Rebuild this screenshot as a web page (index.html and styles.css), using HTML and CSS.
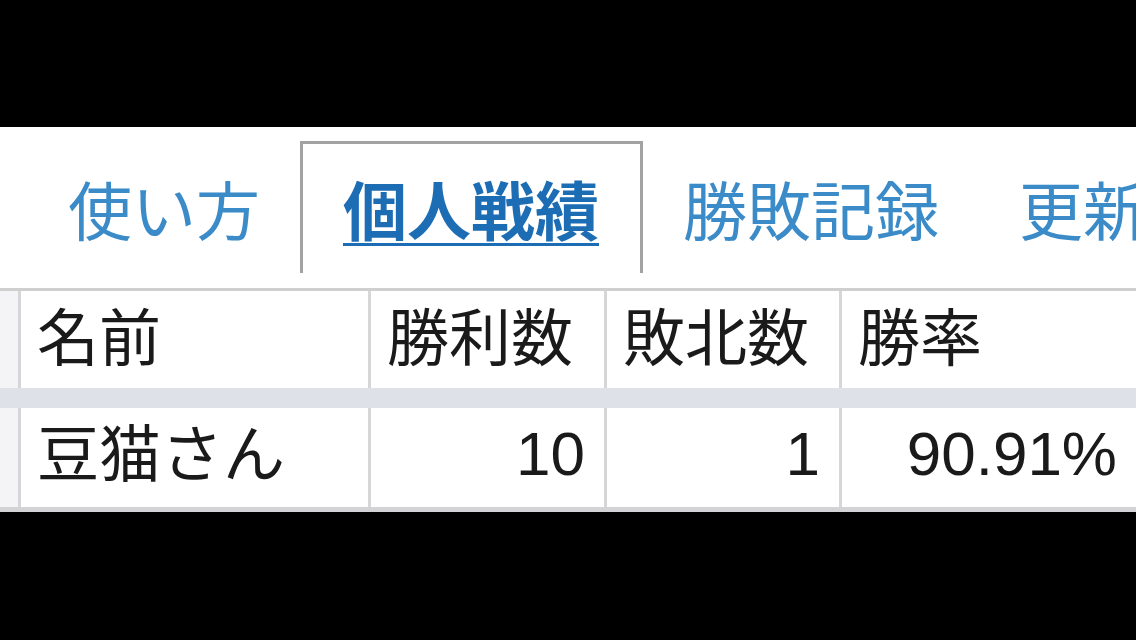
FILE: index.html
```html
<!DOCTYPE html>
<html lang="ja">
<head>
<meta charset="utf-8">
<title>個人戦績</title>
<link rel="stylesheet" href="styles.css">
</head>
<body>
<div class="screen">
  <div class="page">
    <nav class="tabs">
      <a class="tab" href="#">使い方</a>
      <a class="tab active" href="#">個人戦績</a>
      <a class="tab" href="#">勝敗記録</a>
      <a class="tab" href="#">更新</a>
    </nav>
    <div class="grid">
      <div class="cell side"></div>
      <div class="cell head">名前</div>
      <div class="cell head">勝利数</div>
      <div class="cell head">敗北数</div>
      <div class="cell head">勝率</div>
      <div class="band"></div>
      <div class="cell side"></div>
      <div class="cell name">豆猫さん</div>
      <div class="cell num">10</div>
      <div class="cell num">1</div>
      <div class="cell num">90.91%</div>
    </div>
  </div>
</div>
</body>
</html>
```
FILE: styles.css
```css
html, body {
  margin: 0;
  padding: 0;
  background: #000;
  overflow: hidden;
}
body {
  width: 1136px;
  height: 640px;
  font-family: "Liberation Sans", "Noto Sans CJK JP", sans-serif;
}
.screen {
  padding-top: 127px;
}
.page {
  background: #fff;
  height: 385px;
  overflow: hidden;
}
.tabs {
  display: flex;
  padding: 14px 0 0 28px;
  height: 132px;
  margin-bottom: 15px;
  white-space: nowrap;
}
.tab {
  display: block;
  height: 129px;
  line-height: 127px;
  padding: 0 40px;
  border-top: 3px solid transparent;
  font-family: "Noto Sans CJK JP", sans-serif;
  font-size: 64px;
  color: #3a8bc8;
  text-decoration: none;
}
.tab.active {
  border: 3px solid #a2a2a2;
  border-bottom: 0;
  padding: 0 41px 0 40px;
  color: #1d6db5;
  font-weight: 700;
  text-decoration: underline;
  text-decoration-thickness: 3px;
  text-underline-offset: 8px;
}
.grid {
  display: grid;
  grid-template-columns: 18px 347px 233px 232px 1fr;
  grid-template-rows: 97px 20px 99px;
  column-gap: 3px;
  background: #d6d6d8;
  border-top: 3px solid #cfcfcf;
  border-bottom: 5px solid #d3d3d5;
  width: 1136px;
}
.cell {
  background: #fff;
  font-size: 62px;
  color: #1a1a1a;
  padding: 0 16px 12px;
  display: flex;
  align-items: center;
  white-space: nowrap;
  box-sizing: border-box;
}
.cell.name {
  padding-bottom: 16px;
}
.cell.side {
  background: #f4f4f6;
  padding: 0;
}
.cell.num {
  justify-content: flex-end;
  padding-right: 19px;
  padding-bottom: 8px;
}
.band {
  grid-column: 1 / -1;
  background: #dee1e7;
}
```
